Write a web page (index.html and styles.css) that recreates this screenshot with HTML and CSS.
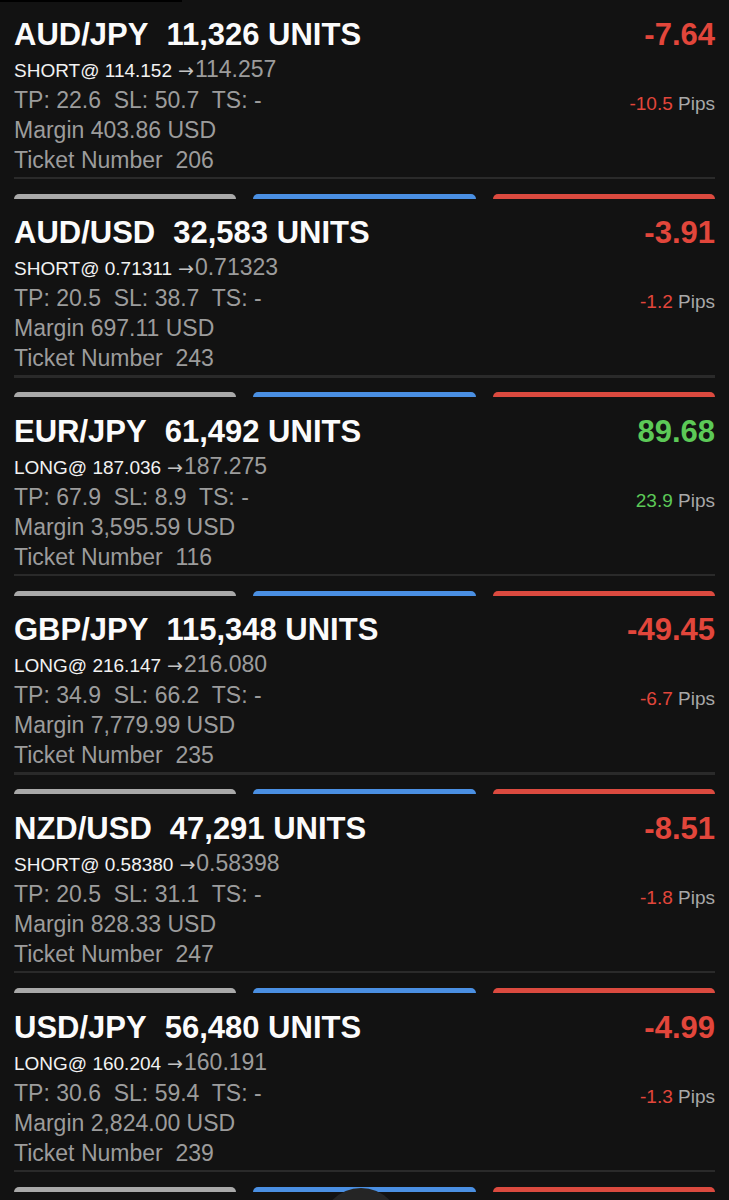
FILE: index.html
```html
<!DOCTYPE html>
<html>
<head>
<meta charset="utf-8">
<link rel="stylesheet" href="styles.css">
</head>
<body>
<div class="topstrip"></div>
<main class="list">
  <section class="card">
    <div class="main">
      <div class="info">
        <div class="title"><span>AUD/JPY</span><span>11,326 UNITS</span></div>
        <div class="price"><span class="side">SHORT@ 114.152</span><span class="arrow">→</span><span class="cur">114.257</span></div>
        <div class="line">TP: 22.6&nbsp; SL: 50.7&nbsp; TS: -</div>
        <div class="line">Margin 403.86 USD</div>
        <div class="line">Ticket Number&nbsp; 206</div>
      </div>
      <div class="pl">
        <div class="value neg">-7.64</div>
        <div class="pips"><span class="neg">-10.5</span> Pips</div>
      </div>
    </div>
    <div class="sep"></div>
    <div class="buttons"><div class="btn gray"></div><div class="btn blue"></div><div class="btn red"></div></div>
  </section>

  <section class="card">
    <div class="main">
      <div class="info">
        <div class="title"><span>AUD/USD</span><span>32,583 UNITS</span></div>
        <div class="price"><span class="side">SHORT@ 0.71311</span><span class="arrow">→</span><span class="cur">0.71323</span></div>
        <div class="line">TP: 20.5&nbsp; SL: 38.7&nbsp; TS: -</div>
        <div class="line">Margin 697.11 USD</div>
        <div class="line">Ticket Number&nbsp; 243</div>
      </div>
      <div class="pl">
        <div class="value neg">-3.91</div>
        <div class="pips"><span class="neg">-1.2</span> Pips</div>
      </div>
    </div>
    <div class="sep"></div>
    <div class="buttons"><div class="btn gray"></div><div class="btn blue"></div><div class="btn red"></div></div>
  </section>

  <section class="card">
    <div class="main">
      <div class="info">
        <div class="title"><span>EUR/JPY</span><span>61,492 UNITS</span></div>
        <div class="price"><span class="side">LONG@ 187.036</span><span class="arrow">→</span><span class="cur">187.275</span></div>
        <div class="line">TP: 67.9&nbsp; SL: 8.9&nbsp; TS: -</div>
        <div class="line">Margin 3,595.59 USD</div>
        <div class="line">Ticket Number&nbsp; 116</div>
      </div>
      <div class="pl">
        <div class="value pos">89.68</div>
        <div class="pips"><span class="pos">23.9</span> Pips</div>
      </div>
    </div>
    <div class="sep"></div>
    <div class="buttons"><div class="btn gray"></div><div class="btn blue"></div><div class="btn red"></div></div>
  </section>

  <section class="card">
    <div class="main">
      <div class="info">
        <div class="title"><span>GBP/JPY</span><span>115,348 UNITS</span></div>
        <div class="price"><span class="side">LONG@ 216.147</span><span class="arrow">→</span><span class="cur">216.080</span></div>
        <div class="line">TP: 34.9&nbsp; SL: 66.2&nbsp; TS: -</div>
        <div class="line">Margin 7,779.99 USD</div>
        <div class="line">Ticket Number&nbsp; 235</div>
      </div>
      <div class="pl">
        <div class="value neg">-49.45</div>
        <div class="pips"><span class="neg">-6.7</span> Pips</div>
      </div>
    </div>
    <div class="sep"></div>
    <div class="buttons"><div class="btn gray"></div><div class="btn blue"></div><div class="btn red"></div></div>
  </section>

  <section class="card">
    <div class="main">
      <div class="info">
        <div class="title"><span>NZD/USD</span><span>47,291 UNITS</span></div>
        <div class="price"><span class="side">SHORT@ 0.58380</span><span class="arrow">→</span><span class="cur">0.58398</span></div>
        <div class="line">TP: 20.5&nbsp; SL: 31.1&nbsp; TS: -</div>
        <div class="line">Margin 828.33 USD</div>
        <div class="line">Ticket Number&nbsp; 247</div>
      </div>
      <div class="pl">
        <div class="value neg">-8.51</div>
        <div class="pips"><span class="neg">-1.8</span> Pips</div>
      </div>
    </div>
    <div class="sep"></div>
    <div class="buttons"><div class="btn gray"></div><div class="btn blue"></div><div class="btn red"></div></div>
  </section>

  <section class="card">
    <div class="main">
      <div class="info">
        <div class="title"><span>USD/JPY</span><span>56,480 UNITS</span></div>
        <div class="price"><span class="side">LONG@ 160.204</span><span class="arrow">→</span><span class="cur">160.191</span></div>
        <div class="line">TP: 30.6&nbsp; SL: 59.4&nbsp; TS: -</div>
        <div class="line">Margin 2,824.00 USD</div>
        <div class="line">Ticket Number&nbsp; 239</div>
      </div>
      <div class="pl">
        <div class="value neg">-4.99</div>
        <div class="pips"><span class="neg">-1.3</span> Pips</div>
      </div>
    </div>
    <div class="sep"></div>
    <div class="buttons"><div class="btn gray"></div><div class="btn blue"></div><div class="btn red"></div></div>
  </section>
</main>
<div class="fab"></div>
</body>
</html>
```

FILE: styles.css
```css
html, body {
  margin: 0;
  padding: 0;
  background: #121212;
}
body {
  font-family: "Liberation Sans", Arial, sans-serif;
  color: #9c9c9c;
  position: relative;
  height: 1200px;
  overflow: hidden;
}
.topstrip {
  position: absolute;
  left: 0;
  top: 0;
  width: 182px;
  height: 2px;
  background: #000;
}
.list {
  display: flex;
  flex-direction: column;
}
.card {
  height: 198.6px;
  box-sizing: border-box;
  padding: 15.6px 14px 0;
  display: flex;
  flex-direction: column;
}
.main {
  display: flex;
  justify-content: space-between;
}
.info {
  display: flex;
  flex-direction: column;
}
.title {
  display: flex;
  gap: 18px;
  font-size: 31px;
  font-weight: bold;
  line-height: 37px;
  color: #fbfbfb;
  white-space: nowrap;
}
.price {
  font-size: 23px;
  line-height: 32px;
  white-space: nowrap;
}
.price .side {
  font-size: 19px;
  line-height: 1;
  color: #f2f2f2;
}
.price .arrow {
  font-family: "DejaVu Sans", sans-serif;
  font-size: 19px;
  line-height: 1;
  color: #c4c4c4;
  margin: 0 1px 0 6px;
}
.price .cur {
  color: #9c9c9c;
}
.line {
  font-size: 23px;
  line-height: 30px;
  white-space: nowrap;
}
.pl {
  display: flex;
  flex-direction: column;
  align-items: flex-end;
}
.value {
  font-size: 31px;
  font-weight: bold;
  line-height: 37px;
}
.pips {
  margin-top: 40px;
  font-size: 19px;
  line-height: 22px;
  color: #a8a8a8;
  white-space: nowrap;
}
.neg { color: #e2463b; }
.pos { color: #5cc957; }
.sep {
  margin-top: 2px;
  height: 3px;
  background: #2a2a2a;
}
.buttons {
  margin-top: 14.5px;
  display: flex;
  gap: 17px;
}
.btn {
  flex: 1;
  height: 5px;
  border-radius: 10px 10px 0 0;
}
.btn.gray { background: #a9a9a9; }
.btn.blue { background: #4a8fe2; }
.btn.red { background: #db4a3f; }
.fab {
  position: absolute;
  left: 321px;
  top: 1188px;
  width: 80px;
  height: 80px;
  border-radius: 50%;
  background: #252525;
}
```
